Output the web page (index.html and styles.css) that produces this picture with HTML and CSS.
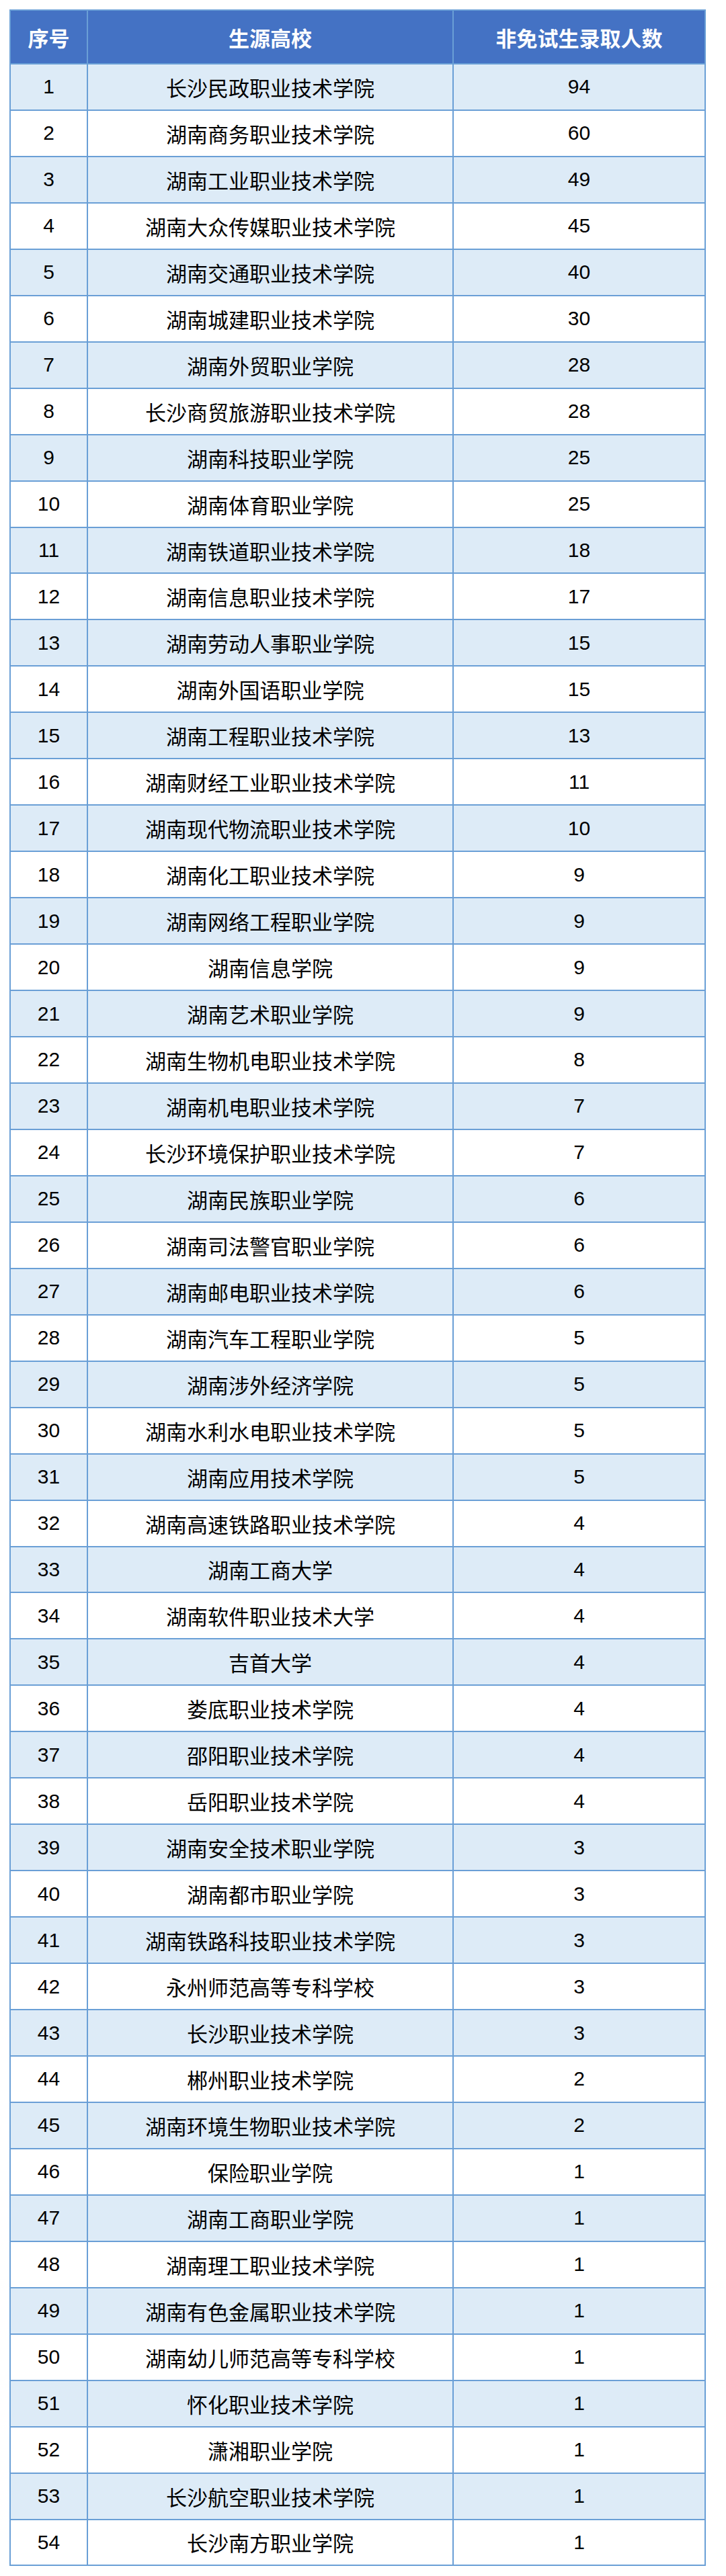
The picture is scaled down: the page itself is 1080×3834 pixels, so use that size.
FILE: index.html
```html
<!DOCTYPE html>
<html lang="zh-CN">
<head>
<meta charset="utf-8">
<title>非免试生录取人数</title>
<link rel="stylesheet" href="styles.css">
</head>
<body>
<table class="tbl">
<colgroup><col class="c1"><col class="c2"><col class="c3"></colgroup>
<thead>
<tr class="head"><th>序号</th><th>生源高校</th><th>非免试生录取人数</th></tr>
</thead>
<tbody>
<tr><td class="n">1</td><td>长沙民政职业技术学院</td><td class="n">94</td></tr>
<tr><td class="n">2</td><td>湖南商务职业技术学院</td><td class="n">60</td></tr>
<tr><td class="n">3</td><td>湖南工业职业技术学院</td><td class="n">49</td></tr>
<tr><td class="n">4</td><td>湖南大众传媒职业技术学院</td><td class="n">45</td></tr>
<tr><td class="n">5</td><td>湖南交通职业技术学院</td><td class="n">40</td></tr>
<tr><td class="n">6</td><td>湖南城建职业技术学院</td><td class="n">30</td></tr>
<tr><td class="n">7</td><td>湖南外贸职业学院</td><td class="n">28</td></tr>
<tr><td class="n">8</td><td>长沙商贸旅游职业技术学院</td><td class="n">28</td></tr>
<tr><td class="n">9</td><td>湖南科技职业学院</td><td class="n">25</td></tr>
<tr><td class="n">10</td><td>湖南体育职业学院</td><td class="n">25</td></tr>
<tr><td class="n">11</td><td>湖南铁道职业技术学院</td><td class="n">18</td></tr>
<tr><td class="n">12</td><td>湖南信息职业技术学院</td><td class="n">17</td></tr>
<tr><td class="n">13</td><td>湖南劳动人事职业学院</td><td class="n">15</td></tr>
<tr><td class="n">14</td><td>湖南外国语职业学院</td><td class="n">15</td></tr>
<tr><td class="n">15</td><td>湖南工程职业技术学院</td><td class="n">13</td></tr>
<tr><td class="n">16</td><td>湖南财经工业职业技术学院</td><td class="n">11</td></tr>
<tr><td class="n">17</td><td>湖南现代物流职业技术学院</td><td class="n">10</td></tr>
<tr><td class="n">18</td><td>湖南化工职业技术学院</td><td class="n">9</td></tr>
<tr><td class="n">19</td><td>湖南网络工程职业学院</td><td class="n">9</td></tr>
<tr><td class="n">20</td><td>湖南信息学院</td><td class="n">9</td></tr>
<tr><td class="n">21</td><td>湖南艺术职业学院</td><td class="n">9</td></tr>
<tr><td class="n">22</td><td>湖南生物机电职业技术学院</td><td class="n">8</td></tr>
<tr><td class="n">23</td><td>湖南机电职业技术学院</td><td class="n">7</td></tr>
<tr><td class="n">24</td><td>长沙环境保护职业技术学院</td><td class="n">7</td></tr>
<tr><td class="n">25</td><td>湖南民族职业学院</td><td class="n">6</td></tr>
<tr><td class="n">26</td><td>湖南司法警官职业学院</td><td class="n">6</td></tr>
<tr><td class="n">27</td><td>湖南邮电职业技术学院</td><td class="n">6</td></tr>
<tr><td class="n">28</td><td>湖南汽车工程职业学院</td><td class="n">5</td></tr>
<tr><td class="n">29</td><td>湖南涉外经济学院</td><td class="n">5</td></tr>
<tr><td class="n">30</td><td>湖南水利水电职业技术学院</td><td class="n">5</td></tr>
<tr><td class="n">31</td><td>湖南应用技术学院</td><td class="n">5</td></tr>
<tr><td class="n">32</td><td>湖南高速铁路职业技术学院</td><td class="n">4</td></tr>
<tr><td class="n">33</td><td>湖南工商大学</td><td class="n">4</td></tr>
<tr><td class="n">34</td><td>湖南软件职业技术大学</td><td class="n">4</td></tr>
<tr><td class="n">35</td><td>吉首大学</td><td class="n">4</td></tr>
<tr><td class="n">36</td><td>娄底职业技术学院</td><td class="n">4</td></tr>
<tr><td class="n">37</td><td>邵阳职业技术学院</td><td class="n">4</td></tr>
<tr><td class="n">38</td><td>岳阳职业技术学院</td><td class="n">4</td></tr>
<tr><td class="n">39</td><td>湖南安全技术职业学院</td><td class="n">3</td></tr>
<tr><td class="n">40</td><td>湖南都市职业学院</td><td class="n">3</td></tr>
<tr><td class="n">41</td><td>湖南铁路科技职业技术学院</td><td class="n">3</td></tr>
<tr><td class="n">42</td><td>永州师范高等专科学校</td><td class="n">3</td></tr>
<tr><td class="n">43</td><td>长沙职业技术学院</td><td class="n">3</td></tr>
<tr><td class="n">44</td><td>郴州职业技术学院</td><td class="n">2</td></tr>
<tr><td class="n">45</td><td>湖南环境生物职业技术学院</td><td class="n">2</td></tr>
<tr><td class="n">46</td><td>保险职业学院</td><td class="n">1</td></tr>
<tr><td class="n">47</td><td>湖南工商职业学院</td><td class="n">1</td></tr>
<tr><td class="n">48</td><td>湖南理工职业技术学院</td><td class="n">1</td></tr>
<tr><td class="n">49</td><td>湖南有色金属职业技术学院</td><td class="n">1</td></tr>
<tr><td class="n">50</td><td>湖南幼儿师范高等专科学校</td><td class="n">1</td></tr>
<tr><td class="n">51</td><td>怀化职业技术学院</td><td class="n">1</td></tr>
<tr><td class="n">52</td><td>潇湘职业学院</td><td class="n">1</td></tr>
<tr><td class="n">53</td><td>长沙航空职业技术学院</td><td class="n">1</td></tr>
<tr><td class="n">54</td><td>长沙南方职业学院</td><td class="n">1</td></tr>
</tbody>
</table>
</body>
</html>
```
FILE: styles.css
```css
html, body {
  margin: 0;
  padding: 0;
  background: #ffffff;
}
body {
  padding: 14px 0 0 14px;
  font-family: "Liberation Sans", "Noto Sans CJK SC", sans-serif;
  color: #000000;
}
.tbl {
  border-collapse: collapse;
  width: 1034px;
  table-layout: fixed;
}
.c1 { width: 115px; }
.c2 { width: 544px; }
.c3 { width: 375px; }
.tbl th, .tbl td {
  border: 2px solid #6a9fd6;
  text-align: center;
  vertical-align: middle;
  padding: 0;
}
.head {
  height: 80px;
  background: #4472c4;
}
.head th {
  color: #ffffff;
  font-family: "Noto Sans CJK SC", sans-serif;
  font-weight: 700;
  font-size: 31px;
  letter-spacing: 0;
}
.tbl tbody tr {
  height: 68.96px;
}
.tbl tbody tr:nth-child(odd) {
  background: #ddebf7;
}
.tbl tbody tr:nth-child(even) {
  background: #ffffff;
}
.tbl td {
  font-family: "Noto Sans CJK SC", sans-serif;
  font-size: 31px;
  font-weight: 400;
}
.tbl td.n {
  font-family: "Liberation Sans", sans-serif;
  font-size: 30px;
}
```
